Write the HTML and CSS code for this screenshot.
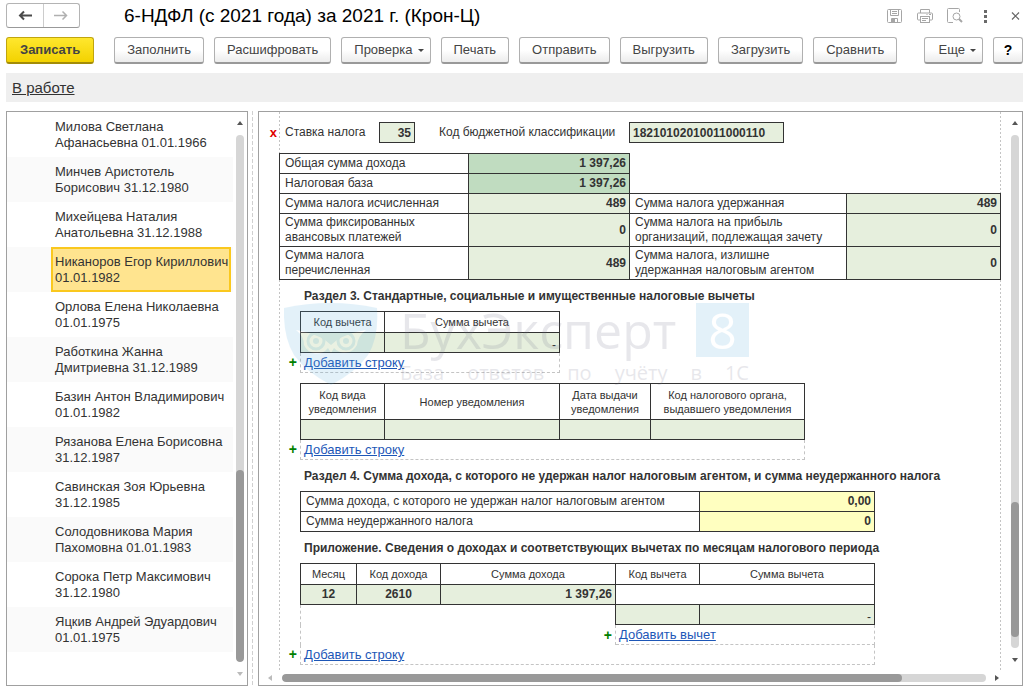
FILE: index.html
```html
<!DOCTYPE html>
<html lang="ru">
<head>
<meta charset="utf-8">
<title>6-НДФЛ (с 2021 года) за 2021 г. (Крон-Ц)</title>
<link rel="stylesheet" href="styles.css">
</head>
<body>
<div class="app">
  <header class="titlebar">
    <div class="nav">
      <button class="nav-btn" aria-label="Назад"><svg width="14" height="11" viewBox="0 0 14 11"><path d="M14 5.500H2M6 1.500l-4 4 4 4" fill="none" stroke="#4a4a4a" stroke-width="2"/></svg></button>
      <button class="nav-btn" aria-label="Вперед"><svg width="14" height="11" viewBox="0 0 14 11"><path d="M0 5.500h13M8.500 1.500l4 4-4 4" fill="none" stroke="#b0b0b0" stroke-width="1.500"/></svg></button>
    </div>
    <h1 class="title">6-НДФЛ (с 2021 года) за 2021 г. (Крон-Ц)</h1>
    <div class="window-tools">
      <button class="icon-btn" aria-label="Сохранить"><svg width="16" height="16" viewBox="0 0 16 16"><g fill="none" stroke="#a6a6a6"><rect x=".5" y="1.500" width="14" height="13" rx="1"/><path d="M3.500 1.500v6h8v-6M5 3.500h5M5 5.500h5M4.500 14v-3.500h6V14"/></g><path d="M5 11h3v3H5z" fill="#a6a6a6"/></svg></button>
      <button class="icon-btn" aria-label="Печать"><svg width="16" height="16" viewBox="0 0 16 16"><g fill="none" stroke="#a6a6a6"><path d="M3.500 5V1.500h9V5M3.500 12h-2a1 1 0 0 1-1-1V6a1 1 0 0 1 1-1h13a1 1 0 0 1 1 1v5a1 1 0 0 1-1 1h-2"/><rect x="3.500" y="8.500" width="9" height="6"/><path d="M5 10.500h6M5 12.500h4M9.500 6.500h1M12 6.500h2"/></g></svg></button>
      <button class="icon-btn" aria-label="Просмотр"><svg width="16" height="16" viewBox="0 0 16 16"><g fill="none" stroke="#a6a6a6"><path d="M6 14.500H1.500a1 1 0 0 1-1-1v-12a1 1 0 0 1 1-1h10a1 1 0 0 1 1 1V4"/><circle cx="9.500" cy="8.500" r="3.500"/><path d="M12 11l3 3" stroke-width="2"/></g></svg></button>
      <button class="icon-btn" aria-label="Меню"><svg width="16" height="16" viewBox="0 0 16 16"><path d="M7 2h3v3H7zM7 7h3v3H7zM7 12h3v3H7z" fill="#6a6a6a"/></svg></button>
      <button class="icon-btn" aria-label="Закрыть"><svg width="16" height="16" viewBox="0 0 16 16"><path d="M5 4.500l7 7M12 4.500l-7 7" stroke="#666" stroke-width="1.200"/></svg></button>
    </div>
  </header>

  <div class="toolbar">
    <button class="btn btn-primary">Записать</button>
    <button class="btn">Заполнить</button>
    <button class="btn">Расшифровать</button>
    <button class="btn btn-menu">Проверка</button>
    <button class="btn">Печать</button>
    <button class="btn">Отправить</button>
    <button class="btn">Выгрузить</button>
    <button class="btn">Загрузить</button>
    <button class="btn">Сравнить</button>
    <button class="btn btn-menu btn-more">Еще</button>
    <button class="btn btn-help">?</button>
  </div>

  <div class="status"><a href="#">В работе</a></div>

  <main class="panes">
    <nav class="people">
      <ul class="people-list">
        <li><button class="person">Милова Светлана<br>Афанасьевна 01.01.1966</button></li>
        <li><button class="person">Минчев Аристотель<br>Борисович 31.12.1980</button></li>
        <li><button class="person">Михейцева Наталия<br>Анатольевна 31.12.1988</button></li>
        <li><button class="person person-active">Никаноров Егор Кириллович<br>01.01.1982</button></li>
        <li><button class="person">Орлова Елена Николаевна<br>01.01.1975</button></li>
        <li><button class="person">Работкина Жанна<br>Дмитриевна 31.12.1989</button></li>
        <li><button class="person">Базин Антон Владимирович<br>01.01.1982</button></li>
        <li><button class="person">Рязанова Елена Борисовна<br>31.12.1987</button></li>
        <li><button class="person">Савинская Зоя Юрьевна<br>31.12.1985</button></li>
        <li><button class="person">Солодовникова Мария<br>Пахомовна 01.01.1983</button></li>
        <li><button class="person">Сорока Петр Максимович<br>31.12.1980</button></li>
        <li><button class="person">Яцкив Андрей Эдуардович<br>01.01.1975</button></li>
      </ul>
      <div class="vscroll">
        <i class="arrow up"></i>
        <div class="track"><div class="rest people-rest"></div><div class="thumb people-thumb"></div></div>
        <i class="arrow down muted"></i>
      </div>
    </nav>
    <div class="splitter"></div>
    <section class="report">
      <div class="report-view">
        <div class="gutter"><button class="remove" aria-label="Удалить">x</button></div>
        <div class="sheet">
          <div class="rate-row">
            <label class="rate-label" for="rate">Ставка налога</label>
            <input class="cell-input rate" id="rate" value="35">
            <label class="kbk-label" for="kbk">Код бюджетной классификации</label>
            <input class="cell-input kbk" id="kbk" value="18210102010011000110">
          </div>

          <table class="grid totals">
            <colgroup><col class="w189"><col class="w161"><col class="w217"><col class="w154"></colgroup>
            <tr><td>Общая сумма дохода</td><td class="num dark">1 397,26</td></tr>
            <tr><td>Налоговая база</td><td class="num dark">1 397,26</td></tr>
            <tr><td>Сумма налога исчисленная</td><td class="num">489</td><td>Сумма налога удержанная</td><td class="num">489</td></tr>
            <tr class="tall"><td>Сумма фиксированных<br>авансовых платежей</td><td class="num">0</td><td>Сумма налога на прибыль<br>организаций, подлежащая зачету</td><td class="num">0</td></tr>
            <tr class="tall"><td>Сумма налога<br>перечисленная</td><td class="num">489</td><td>Сумма налога, излишне<br>удержанная налоговым агентом</td><td class="num">0</td></tr>
          </table>

          <h2>Раздел 3. Стандартные, социальные и имущественные налоговые вычеты</h2>
          <div class="block">
            <table class="grid">
              <colgroup><col class="w84"><col class="w175"></colgroup>
              <tr><th>Код вычета</th><th>Сумма вычета</th></tr>
              <tr><td class="fill"></td><td class="num dash">-</td></tr>
            </table>
            <button class="plus" aria-label="Добавить строку вычета">+</button>
            <div class="add"><a href="#">Добавить строку</a></div>
          </div>

          <div class="block spaced">
            <table class="grid">
              <colgroup><col class="w84"><col class="w175"><col class="w91"><col class="w154"></colgroup>
              <tr class="two-line"><th>Код вида<br>уведомления</th><th>Номер уведомления</th><th>Дата выдачи<br>уведомления</th><th>Код налогового органа,<br>выдавшего уведомления</th></tr>
              <tr><td class="fill"></td><td class="fill"></td><td class="fill"></td><td class="fill"></td></tr>
            </table>
            <button class="plus" aria-label="Добавить строку уведомления">+</button>
            <div class="add"><a href="#">Добавить строку</a></div>
          </div>

          <h2>Раздел 4. Сумма дохода, с которого не удержан налог налоговым агентом, и сумма неудержанного налога</h2>
          <div class="block">
            <table class="grid">
              <colgroup><col class="w399"><col class="w175"></colgroup>
              <tr><td>Сумма дохода, с которого не удержан налог налоговым агентом</td><td class="num edit">0,00</td></tr>
              <tr><td>Сумма неудержанного налога</td><td class="num edit">0</td></tr>
            </table>
          </div>

          <h2>Приложение. Сведения о доходах и соответствующих вычетах по месяцам налогового периода</h2>
          <div class="block">
            <table class="grid">
              <colgroup><col class="w56"><col class="w84"><col class="w175"><col class="w84"><col class="w175"></colgroup>
              <tr><th>Месяц</th><th>Код дохода</th><th>Сумма дохода</th><th>Код вычета</th><th>Сумма вычета</th></tr>
              <tr><td class="num center">12</td><td class="num center">2610</td><td class="num">1 397,26</td><td colspan="2"></td></tr>
              <tr><td class="open" colspan="3"></td><td class="fill"></td><td class="num dash">-</td></tr>
              <tr><td class="open right" colspan="3"><button class="plus" aria-label="Добавить вычет">+</button></td><td class="hint" colspan="2"><a href="#">Добавить вычет</a></td></tr>
            </table>
            <button class="plus" aria-label="Добавить строку дохода">+</button>
            <div class="add"><a href="#">Добавить строку</a></div>
          </div>

          <div class="watermark" aria-hidden="true">
            <svg class="wm-logo" width="94" height="82" viewBox="0 0 94 82">
              <path d="M0 5Q46-5 93 5Q95 34 84 52Q72 69 47 82Q22 69 10 52Q-1 34 0 5z" fill="#58ade0"/>
              <path d="M12 27Q30 30 41 37L47 42L53 37Q64 30 82 27Q74 33 73 42A14 14 0 0 1 50 45L47 50L44 45A14 14 0 0 1 20 42Q20 33 12 27z" fill="#fff"/>
              <g fill="none" stroke="#58ade0" stroke-width="3"><circle cx="32" cy="38" r="8"/><circle cx="62" cy="38" r="8"/></g>
              <g fill="#58ade0"><circle cx="32" cy="38" r="3"/><circle cx="62" cy="38" r="3"/></g>
            </svg>
            <div class="wm-text">
              <div class="wm-name"><span>БухЭксперт</span><b>8</b></div>
              <div class="wm-sub"><span>База</span><span>ответов</span><span>по</span><span>учёту</span><span>в</span><span>1С</span></div>
            </div>
          </div>
        </div>
        <div class="vscroll">
          <i class="arrow up"></i>
          <div class="track"><div class="rest report-rest"></div><div class="thumb report-thumb"></div></div>
          <i class="arrow down"></i>
        </div>
      </div>
      <div class="hscroll">
        <i class="arrow left muted"></i>
        <div class="track"><div class="thumb"></div></div>
        <i class="arrow right-arrow"></i>
      </div>
    </section>
  </main>
</div>
</body>
</html>
```

FILE: styles.css
```css
* { box-sizing: border-box; }

body {
  margin: 0;
  background: #fff;
  color: #333;
  font: 13px/16px "Liberation Sans", Arial, sans-serif;
}

button, input { font: inherit; color: inherit; }
button { padding: 0; border: 0; background: none; }

.app {
  display: flex;
  flex-direction: column;
  min-height: 100vh;
  padding: 3px 10px 4px 6px;
}

/* Title bar */
.titlebar { display: flex; align-items: center; height: 25px; }
.nav {
  display: flex;
  width: 74px;
  height: 25px;
  border: 1px solid #b4b4b4;
  border-bottom-color: #999;
  border-radius: 3px;
}
.nav-btn { display: flex; flex: 1; align-items: center; justify-content: center; }
.nav-btn + .nav-btn { border-left: 1px solid #ccc; }
.title { flex: 1; margin: 0 0 0 44px; color: #000; font-size: 19px; line-height: 24px; font-weight: 400; }
.window-tools { display: flex; gap: 14px; }
.icon-btn { display: flex; width: 16px; height: 16px; }

/* Toolbar */
.toolbar { display: flex; gap: 10px; margin-top: 9px; }
.btn {
  height: 27px;
  padding: 0 12px;
  border: 1px solid #b0b0b0;
  border-bottom: 2px solid #999;
  border-radius: 3px;
  background: linear-gradient(#fff 50%, #ececec);
  color: #444;
  white-space: nowrap;
}
.btn-primary {
  margin-right: 10px;
  padding: 0 13px;
  border-color: #c0a50e;
  border-bottom-color: #a38c08;
  background: linear-gradient(#ffe72e, #f3d200);
  font-weight: 700;
}
.btn-menu::after {
  content: "";
  display: inline-block;
  margin-left: 5px;
  border: 3px solid transparent;
  border-top-color: #444;
  border-bottom: 0;
  vertical-align: 2px;
}
.btn-menu { padding-right: 6px; }
.btn-more { margin-left: auto; padding-left: 14px; }
.btn-help { width: 30px; padding: 0; color: #000; font-weight: 700; font-size: 14px; }

.status {
  margin-top: 9px;
  padding: 6px;
  background: #efefef;
  font-size: 15px;
  line-height: 17px;
}
.status a { color: #333; }

/* Panes */
.panes { display: flex; flex: 1; margin-top: 9px; }
.people { display: flex; flex: none; width: 242px; border: 1px solid #a0a0a0; }
.people-list { flex: 1; min-width: 0; margin: 0; padding: 0; list-style: none; }
.people-list li { height: 45px; padding: 0 2px 0 44px; }
.people-list li:nth-child(even) { background: #fafafa; }
.person {
  width: 100%;
  height: 45px;
  padding: 0 0 0 2px;
  border: 2px solid transparent;
  text-align: left;
  white-space: nowrap;
}
.person-active { border-color: #fac81e; background: #ffe48f; }

.splitter {
  flex: none;
  width: 1px;
  margin: 0 5px 0 4px;
  background: repeating-linear-gradient(#d0d0d0 0 4px, transparent 4px 6px);
}

/* Scrollbars */
.vscroll { display: flex; flex: none; flex-direction: column; align-items: center; width: 14px; padding: 9px 3px 9px 3px; }
.track { border-radius: 4px; background: #d6d6d6; overflow: hidden; }
.thumb { border-radius: 4px; background: #999; }
.vscroll .track { display: flex; flex: 1; flex-direction: column; width: 8px; margin: 10px 0 10px; }
.people-rest { flex: 335; }
.people-thumb { flex: 192; }
.report-rest { flex: 367; }
.report-thumb { flex: 135; margin-bottom: 11px; }
.arrow { flex: none; width: 0; height: 0; border: 3px solid transparent; }
.up { border-top: 0; border-bottom: 4px solid #555; }
.down { border-bottom: 0; border-top: 4px solid #555; }
.down.muted { border-top-color: #bbb; }
.left { border-left: 0; border-right: 4px solid #bbb; }
.right-arrow { border-right: 0; border-left: 4px solid #555; }
.hscroll { display: flex; align-items: center; height: 15px; padding: 0 23px 0 9px; }
.hscroll .track { flex: 1; height: 8px; margin: 0 9px 0 10px; }
.hscroll .thumb { width: 88%; height: 8px; }

/* Report */
.report { display: flex; flex: 1; flex-direction: column; border: 1px solid #a0a0a0; }
.report-view { display: flex; flex: 1; }
.gutter { flex: none; width: 20px; padding: 13px 2px 0 0; text-align: right; }
.remove { color: #e00000; font-weight: 700; }
.report .vscroll { margin-left: auto; width: 14px; padding-bottom: 8px; }
.sheet {
  position: relative;
  flex: none;
  width: 722px;
  font-size: 12px;
  line-height: 15px;
  background:
    repeating-linear-gradient(#c4c4c4 0 2px, transparent 2px 4px) left / 1px 100% no-repeat,
    repeating-linear-gradient(#c4c4c4 0 2px, transparent 2px 4px) right / 1px 100% no-repeat;
}
.rate-row { display: flex; align-items: center; height: 41px; padding-left: 6px; }
.rate-label { width: 94px; }
.kbk-label { width: 190px; margin-left: 24px; white-space: nowrap; }
.cell-input {
  height: 21px;
  padding: 0 3px;
  border: 1px solid #333;
  border-radius: 0;
  background: #e6efdd;
  font-weight: 700;
}
.rate { width: 36px; text-align: right; }
.kbk { width: 155px; }

.grid { border-collapse: collapse; table-layout: fixed; width: 1px; }
.grid tr { height: 20px; }
.grid td, .grid th { padding: 0 3px 0 5px; border: 1px solid #333; white-space: nowrap; }
.grid th { height: 21px; padding: 0; font-size: 11px; line-height: 14px; font-weight: 400; text-align: center; }
.grid .two-line th { height: 36px; }
.grid .tall { height: 33px; }
.grid .num { background: #e6efdd; font-weight: 700; text-align: right; }
.grid .fill { background: #e6efdd; }
.grid .dark { background: #c0dcc0; }
.grid .edit { background: #ffffc0; }
.grid .center { padding: 0; text-align: center; }
.grid .dash { font-weight: 400; vertical-align: bottom; line-height: 14px; }
.grid .open { border-left: 1px dashed #c4c4c4; border-bottom: 0; }
.grid .open.right { padding: 0 3px 0 0; border-top: 0; border-right: 1px dashed #c4c4c4; text-align: right; }
.grid .hint { padding-left: 3px; border: 1px dashed #c4c4c4; border-top: 1px solid #333; font-size: 13px; }
.w56 { width: 56px; }
.w84 { width: 84px; }
.w91 { width: 91px; }
.w154 { width: 154px; }
.w161 { width: 161px; }
.w175 { width: 175px; }
.w189 { width: 189px; }
.w217 { width: 217px; }
.w399 { width: 399px; }

.sheet h2 { margin: 8px 0 7px 25px; font-size: 12px; line-height: 16px; font-weight: 700; white-space: nowrap; }
.block { display: grid; grid-template-columns: 21px max-content; }
.block .grid { grid-column: 2; }
.block.spaced { margin-top: 10px; }
.plus { height: 18px; color: #008000; font-weight: 700; font-size: 14px; line-height: 18px; text-align: right; }
.block > .plus { padding-right: 3px; }
.add { height: 20px; padding: 2px 3px 1px; border: 1px dashed #c4c4c4; border-top: 0; font-size: 13px; }
.sheet a { color: #1d57b7; }

/* Watermark over the sheet */
.watermark { position: absolute; left: 5px; top: 191px; display: flex; gap: 22px; width: 465px; opacity: .16; pointer-events: none; }
.wm-logo { flex: none; }
.wm-text { flex: 1; color: #70708a; }
.wm-name { display: flex; justify-content: space-between; font: 50px/54px "Open Sans", sans-serif; }
.wm-name b { width: 53px; background: #58ade0; color: #fff; font-weight: 400; text-align: center; }
.wm-sub { display: flex; justify-content: space-between; font: 20px/32px "Open Sans", sans-serif; }
```
